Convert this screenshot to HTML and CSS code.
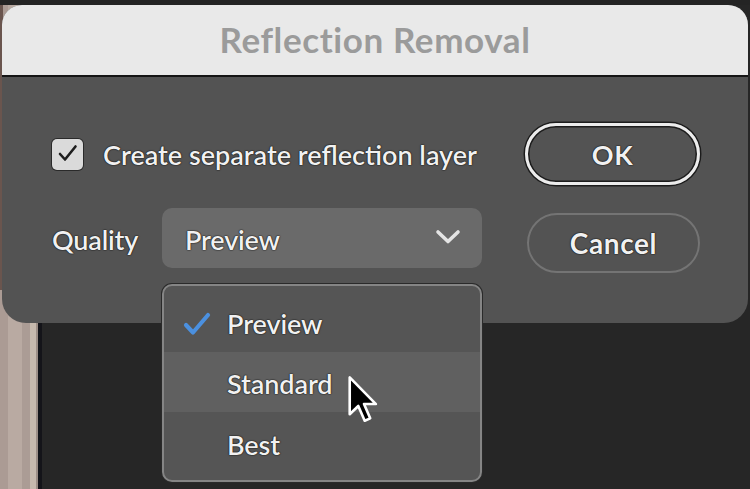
FILE: index.html
```
<!DOCTYPE html>
<html>
<head>
<meta charset="utf-8">
<link rel="stylesheet" href="styles.css">
</head>
<body>
<div class="scene">
  <div class="dialog">
    <div class="titlebar">Reflection Removal</div>
    <div class="content">
      <div class="left">
        <div class="check-row">
          <span class="checkbox">
            <svg width="31" height="31" viewBox="0 0 31 31"><path d="M8 15 L13 20.5 L23.5 7.5" fill="none" stroke="#1e1e1e" stroke-width="2.6" stroke-linecap="round" stroke-linejoin="round"/></svg>
          </span>
          <span class="label">Create separate reflection layer</span>
        </div>
        <div class="quality-row">
          <span class="qlabel">Quality</span>
          <div class="select">
            <span class="label">Preview</span>
            <svg class="chev" width="26" height="16" viewBox="0 0 26 16"><path d="M3 3 L13 12.5 L23 3" fill="none" stroke="#e4e4e4" stroke-width="3.6" stroke-linecap="round" stroke-linejoin="round"/></svg>
          </div>
        </div>
      </div>
      <div class="buttons">
        <div class="btn ok">OK</div>
        <div class="btn cancel">Cancel</div>
      </div>
    </div>
  </div>
  <div class="menu">
    <div class="item first">
      <svg class="tick" width="28" height="24" viewBox="0 0 28 24"><path d="M3 13 L10 20.5 L25 3" fill="none" stroke="#4b90df" stroke-width="4.2" stroke-linecap="round" stroke-linejoin="round"/></svg>
      <span class="label">Preview</span>
    </div>
    <div class="item hover"><span class="label">Standard</span></div>
    <div class="item last"><span class="label">Best</span></div>
  </div>
  <svg class="cursor" width="34" height="50" viewBox="0 0 14 21"><path d="M1 1 L1 16.5 L4.6 13 L7.3 19.2 L9.6 18.2 L7 12.2 L12 12.2 Z" fill="#000" stroke="#fff" stroke-width="1.1" stroke-linejoin="round"/></svg>
</div>
</body>
</html>
```
FILE: styles.css
```
* { box-sizing: border-box; }
html, body { margin: 0; padding: 0; }
body { width: 750px; height: 489px; overflow: hidden; }

.scene {
  position: relative;
  width: 750px;
  height: 489px;
  overflow: hidden;
  padding-top: 5px;
  padding-left: 2px;
  background:
    linear-gradient(to bottom, #242424 0 5px, transparent 5px),
    linear-gradient(to right, #6a554e 0 3px, transparent 3px) 0 0 / 100% 290px no-repeat,
    linear-gradient(to right, #ab9b94 0 8px, #b9aaa2 8px 22px, #ab9c95 22px 30px, #c6b9ad 30px 36px, #9c8e86 36px 38px, #141419 38px 42px, #262626 42px);
  font-family: "Lato", "Open Sans", sans-serif;
  color: #f1f1f1;
}

.dialog {
  width: 746px;
  height: 318px;
  border-radius: 20px 20px 24px 24px;
  background: #535353;
  overflow: hidden;
  display: flex;
  flex-direction: column;
}

.titlebar {
  height: 72px;
  flex: none;
  background: #e9e9e9;
  border-bottom: 2px solid #151515;
  color: #9b9b9b;
  font-weight: 700;
  font-size: 35px;
  letter-spacing: 0.6px;
  display: flex;
  align-items: center;
  justify-content: center;
  padding-bottom: 2px;
}

.content {
  flex: 1;
  display: flex;
  align-items: flex-start;
}

.label, .qlabel, .btn {
  text-shadow: 0 0 1.5px #000, 0 0 1px #000;
}

.left {
  margin-left: 50px;
  margin-top: 61px;
}

.check-row {
  display: flex;
  align-items: center;
  height: 33px;
}

.checkbox {
  width: 31px;
  height: 31px;
  border-radius: 5px;
  background: #dadada;
  box-shadow: 0 0 0 1px #2a2a2a;
  display: block;
}
.checkbox svg { display: block; }

.check-row .label {
  margin-left: 20px;
  font-size: 27px;
  letter-spacing: 0;
  font-weight: 600;
}

.quality-row {
  margin-top: 37px;
  display: flex;
  align-items: center;
}

.qlabel {
  width: 110px;
  font-size: 27px;
  font-weight: 600;
  letter-spacing: -0.2px;
  padding-top: 2px;
}

.select {
  width: 320px;
  height: 60px;
  border-radius: 10px;
  background: #6a6a6a;
  display: flex;
  align-items: center;
  justify-content: space-between;
  padding: 2px 21px 0 23px;
}
.select .label {
  font-size: 27px;
  font-weight: 600;
  letter-spacing: -0.2px;
}
.chev { display: block; margin-top: -4px; }

.buttons {
  margin-left: auto;
  margin-right: 48px;
  margin-top: 46px;
  width: 175px;
  display: flex;
  flex-direction: column;
  gap: 28px;
}

.btn {
  border-radius: 32px;
  display: flex;
  align-items: center;
  justify-content: center;
  font-weight: 700;
  font-size: 27px;
  letter-spacing: 0.6px;
}
.ok {
  height: 62px;
  border: 3px solid #ececec;
  box-shadow: 0 0 0 1.5px #1c1c1c, inset 0 0 0 1.5px #1c1c1c;
}
.cancel {
  height: 60px;
  border: 2px solid #747474;
  margin-left: 2px;
  font-size: 28px;
}

.menu {
  position: absolute;
  left: 162px;
  top: 284px;
  width: 320px;
  height: 198px;
  border: 2px solid #858585;
  border-radius: 10px;
  background: #555555;
  overflow: hidden;
  box-shadow: 0 0 0 1px #2a2a2a;
}
.item {
  display: flex;
  align-items: center;
  padding-left: 63px;
  position: relative;
}
.item .label {
  font-size: 27px;
  font-weight: 600;
  letter-spacing: -0.1px;
}
.item.first { height: 66px; padding-top: 8px; }
.item.hover { height: 60px; background: #606060; padding-top: 2px; }
.item.last { height: 68px; padding-bottom: 4px; }
.tick {
  position: absolute;
  left: 19px;
  top: 26px;
}

.cursor {
  position: absolute;
  left: 347px;
  top: 375px;
}
```
